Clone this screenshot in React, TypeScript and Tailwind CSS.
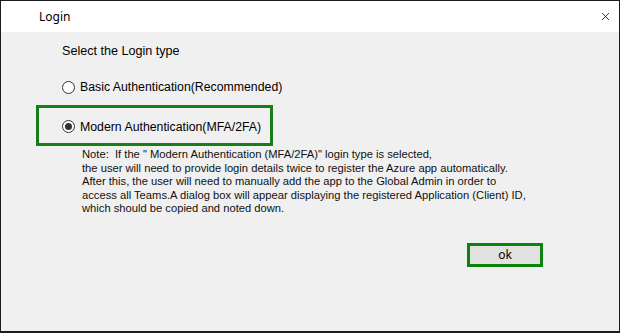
import { X } from 'lucide-react';

// Small WinForms-style radio button
function Radio({ checked }: { checked?: boolean }) {
  return (
    <span className="inline-flex items-center justify-center w-[13px] h-[13px] rounded-full border border-[#333333] bg-white shrink-0">
      {checked && <span className="w-[7px] h-[7px] rounded-full bg-[#333333]" />}
    </span>
  );
}

export default function App() {
  return (
    <div className="w-[620px] h-[333px] flex flex-col border border-b-2 border-[#1c1c1c] bg-[#f0f0f0] font-['Liberation_Sans',Arial,sans-serif] text-black">
      {/* Title bar */}
      <div className="h-[31px] bg-white flex items-center justify-between pl-[38px] pr-[7px] shrink-0">
        <span className="text-[12px] font-['Noto_Sans',sans-serif] pt-[1px]">Login</span>
        <X className="w-[13px] h-[13px] text-black" strokeWidth={1.4} />
      </div>

      {/* Body */}
      <div className="flex-1 flex flex-col items-start pl-[34px] pt-[11px]">
        <p className="ml-[27px] text-[12.6px] leading-[16px]">Select the Login type</p>

        <label className="ml-[27px] mt-[20px] flex items-center gap-[5px] text-[12.3px] leading-[16px]">
          <Radio />
          <span>Basic Authentication(Recommended)</span>
        </label>

        <div className="ml-[1px] mt-[10px] w-[237px] h-[41px] border-[3px] border-[#177d17] flex items-center pl-[23px] pt-[2px]">
          <label className="flex items-center gap-[5px] text-[12.3px] leading-[16px]">
            <Radio checked />
            <span>Modern Authentication(MFA/2FA)</span>
          </label>
        </div>

        <p className="ml-[47px] mt-[2px] text-[11.2px] leading-[13.5px] text-[#111111] whitespace-nowrap">
          Note:&nbsp; If the " Modern Authentication (MFA/2FA)" login type is selected,
          <br />
          the user will need to provide login details twice to register the Azure app automatically.
          <br />
          After this, the user will need to manually add the app to the Global Admin in order to
          <br />
          access all Teams.A dialog box will appear displaying the registered Application (Client) ID,
          <br />
          which should be copied and noted down.
        </p>

        <button className="ml-[432px] mt-[27px] w-[76px] h-[24px] bg-[#e1e1e1] border-[3px] border-[#0d820d] flex items-center justify-center text-[12px] font-['Noto_Sans',sans-serif]">
          ok
        </button>
      </div>
    </div>
  );
}
